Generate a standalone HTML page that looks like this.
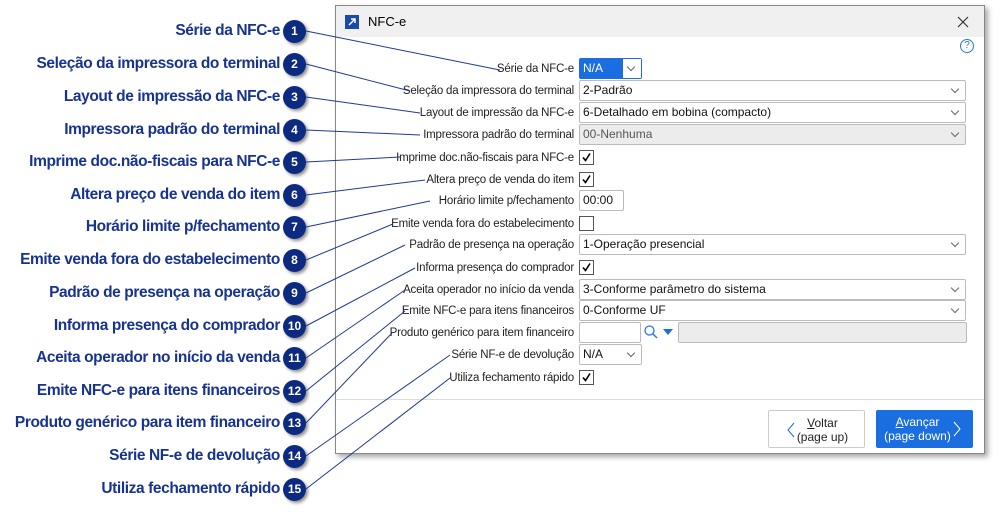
<!DOCTYPE html>
<html><head><meta charset="utf-8"><style>
body{margin:0;width:1008px;height:515px;background:#fff;position:relative;overflow:hidden;font-family:"Liberation Sans",sans-serif}
.ll{position:absolute;right:728px;font-weight:bold;font-size:15.5px;color:#17338f;white-space:nowrap;letter-spacing:-0.4px}
.c{position:absolute;left:283px;width:23px;height:23px;border-radius:50%;background:#0c2a80;color:#fff;font-weight:bold;font-size:12px;text-align:center;line-height:23px;box-shadow:2px 2px 3px rgba(0,0,0,.45)}
.dlg{position:absolute;left:335px;top:5px;width:648px;height:447px;border:1px solid #888;background:#fff;box-shadow:3px 3px 5px rgba(0,0,0,.35)}
.tb{height:31px;background:#f0f0f0;position:relative}
.fl{position:absolute;right:434px;font-size:11.5px;color:#222;white-space:nowrap;margin-top:1px;letter-spacing:-0.2px}
.in{position:absolute;left:579px;height:19px;border:1px solid #bbb;border-radius:2px;background:#fff;font-size:12px;line-height:19px;padding-left:3px;box-sizing:content-box;color:#111}
.dd::after{content:"";position:absolute;right:7px;top:5px;width:5px;height:5px;border-right:1px solid #666;border-bottom:1px solid #666;transform:rotate(45deg)}
.cb{position:absolute;left:579px;width:13px;height:13px;border:1px solid #555;background:#fff}
.btn{position:absolute;top:410px;height:38px;font-size:12px;text-align:center;line-height:14px;box-sizing:border-box;padding-top:5px}
</style></head><body>
<svg width="1008" height="515" style="position:absolute;left:0;top:0;z-index:3" fill="none" stroke="#1f3a96" stroke-width="1">
<line x1="306" y1="31" x2="500" y2="70"/><line x1="306" y1="64" x2="410" y2="91"/><line x1="306" y1="97" x2="420" y2="113"/><line x1="306" y1="130" x2="420" y2="135"/><line x1="306" y1="162" x2="400" y2="157"/><line x1="306" y1="195" x2="425" y2="180"/><line x1="306" y1="227" x2="430" y2="201"/><line x1="306" y1="260" x2="393" y2="224"/><line x1="306" y1="293" x2="405" y2="245"/><line x1="306" y1="326" x2="415" y2="268"/><line x1="306" y1="358" x2="405" y2="290"/><line x1="306" y1="391" x2="405" y2="311"/><line x1="306" y1="423" x2="392" y2="333"/><line x1="306" y1="456" x2="450" y2="355"/><line x1="306" y1="489" x2="450" y2="378"/>
</svg>
<div class="ll" style="top:22px">Série da NFC-e</div><div class="c" style="top:20px">1</div>
<div class="ll" style="top:55px">Seleção da impressora do terminal</div><div class="c" style="top:53px">2</div>
<div class="ll" style="top:88px">Layout de impressão da NFC-e</div><div class="c" style="top:86px">3</div>
<div class="ll" style="top:121px">Impressora padrão do terminal</div><div class="c" style="top:119px">4</div>
<div class="ll" style="top:153px">Imprime doc.não-fiscais para NFC-e</div><div class="c" style="top:151px">5</div>
<div class="ll" style="top:186px">Altera preço de venda do item</div><div class="c" style="top:184px">6</div>
<div class="ll" style="top:218px">Horário limite p/fechamento</div><div class="c" style="top:216px">7</div>
<div class="ll" style="top:251px">Emite venda fora do estabelecimento</div><div class="c" style="top:249px">8</div>
<div class="ll" style="top:284px">Padrão de presença na operação</div><div class="c" style="top:282px">9</div>
<div class="ll" style="top:317px">Informa presença do comprador</div><div class="c" style="top:315px">10</div>
<div class="ll" style="top:349px">Aceita operador no início da venda</div><div class="c" style="top:347px">11</div>
<div class="ll" style="top:382px">Emite NFC-e para itens financeiros</div><div class="c" style="top:380px">12</div>
<div class="ll" style="top:414px">Produto genérico para item financeiro</div><div class="c" style="top:412px">13</div>
<div class="ll" style="top:447px">Série NF-e de devolução</div><div class="c" style="top:445px">14</div>
<div class="ll" style="top:480px">Utiliza fechamento rápido</div><div class="c" style="top:478px">15</div>

<div class="dlg"><div class="tb">
<div style="position:absolute;left:9px;top:9px;width:14px;height:14px;background:#1a4aa8"><svg width="14" height="14" style="position:absolute"><path d="M4 10L10 4M6 4H10V8" stroke="#fff" stroke-width="1.5" fill="none"/></svg></div>
<div style="position:absolute;left:32px;top:8px;font-size:13px">NFC-e</div>
<svg width="12" height="12" style="position:absolute;right:15px;top:10px"><path d="M1 1L11 11M11 1L1 11" stroke="#333" stroke-width="1.2"/></svg></div>
<div style="position:absolute;right:10px;top:33px;width:12px;height:12px;border:1px solid #2a7ad8;border-radius:50%;color:#2a7ad8;font-size:10px;text-align:center;line-height:12px">?</div>
<div style="position:absolute;left:0;right:0;top:393px;border-top:1px solid #ddd"></div>
</div>

<div class="fl" style="top:62px">Série da NFC-e</div>
<div class="in dd" style="top:58px;width:58px;background:#1b6ee0;color:#fff;border-color:#1b6ee0">N/A<span style="position:absolute;right:0;top:0;width:18px;height:19px;background:#fff"></span></div>
<div class="fl" style="top:84px">Seleção da impressora do terminal</div><div class="in dd" style="top:80px;width:382px">2-Padrão</div>
<div class="fl" style="top:106px">Layout de impressão da NFC-e</div><div class="in dd" style="top:102px;width:382px">6-Detalhado em bobina (compacto)</div>
<div class="fl" style="top:128px">Impressora padrão do terminal</div><div class="in dd" style="top:124px;width:382px;background:#ececec;color:#555">00-Nenhuma</div>
<div class="fl" style="top:151px">Imprime doc.não-fiscais para NFC-e</div><div class="cb" style="top:150px"><svg width="13" height="13"><path d="M3 6.5L5.5 9.5L10 2.5" stroke="#000" stroke-width="1.6" fill="none"/></svg></div>
<div class="fl" style="top:173px">Altera preço de venda do item</div><div class="cb" style="top:172px"><svg width="13" height="13"><path d="M3 6.5L5.5 9.5L10 2.5" stroke="#000" stroke-width="1.6" fill="none"/></svg></div>
<div class="fl" style="top:194px">Horário limite p/fechamento</div><div class="in" style="top:190px;width:40px">00:00</div>
<div class="fl" style="top:217px">Emite venda fora do estabelecimento</div><div class="cb" style="top:216px"></div>
<div class="fl" style="top:238px">Padrão de presença na operação</div><div class="in dd" style="top:234px;width:382px">1-Operação presencial</div>
<div class="fl" style="top:261px">Informa presença do comprador</div><div class="cb" style="top:260px"><svg width="13" height="13"><path d="M3 6.5L5.5 9.5L10 2.5" stroke="#000" stroke-width="1.6" fill="none"/></svg></div>
<div class="fl" style="top:283px">Aceita operador no início da venda</div><div class="in dd" style="top:279px;width:382px">3-Conforme parâmetro do sistema</div>
<div class="fl" style="top:304px">Emite NFC-e para itens financeiros</div><div class="in dd" style="top:300px;width:382px">0-Conforme UF</div>
<div class="fl" style="top:326px">Produto genérico para item financeiro</div><div class="in" style="top:322px;width:57px"></div>
<svg width="16" height="16" style="position:absolute;left:643px;top:324px"><circle cx="6.5" cy="6.5" r="4.5" stroke="#2a7ad8" stroke-width="1.3" fill="none"/><path d="M10 10L14 14" stroke="#2a7ad8" stroke-width="1.5"/></svg>
<div style="position:absolute;left:663px;top:329px;border:5px solid transparent;border-top:6px solid #1b6ee0"></div>
<div class="in" style="top:322px;left:678px;width:284px;background:#ececec"></div>
<div class="fl" style="top:348px">Série NF-e de devolução</div><div class="in dd" style="top:344px;width:58px">N/A</div>
<div class="fl" style="top:371px">Utiliza fechamento rápido</div><div class="cb" style="top:370px"><svg width="13" height="13"><path d="M3 6.5L5.5 9.5L10 2.5" stroke="#000" stroke-width="1.6" fill="none"/></svg></div>

<div class="btn" style="left:768px;width:97px;border:1px solid #ccc;border-radius:2px;background:#fff;color:#222"><svg width="8" height="16" style="position:absolute;left:18px;top:11px"><path d="M7 1L1 8L7 15" stroke="#1b6ee0" fill="none"/></svg><span style="padding-left:12px;display:inline-block"><u>V</u>oltar<br>(page up)</span></div>
<div class="btn" style="left:876px;width:97px;background:#1b6ee0;color:#fff;border-radius:2px"><svg width="8" height="16" style="position:absolute;right:12px;top:11px"><path d="M1 1L7 8L1 15" stroke="#fff" fill="none"/></svg><span style="padding-right:14px;display:inline-block"><u>A</u>vançar<br>(page down)</span></div>
</body></html>
